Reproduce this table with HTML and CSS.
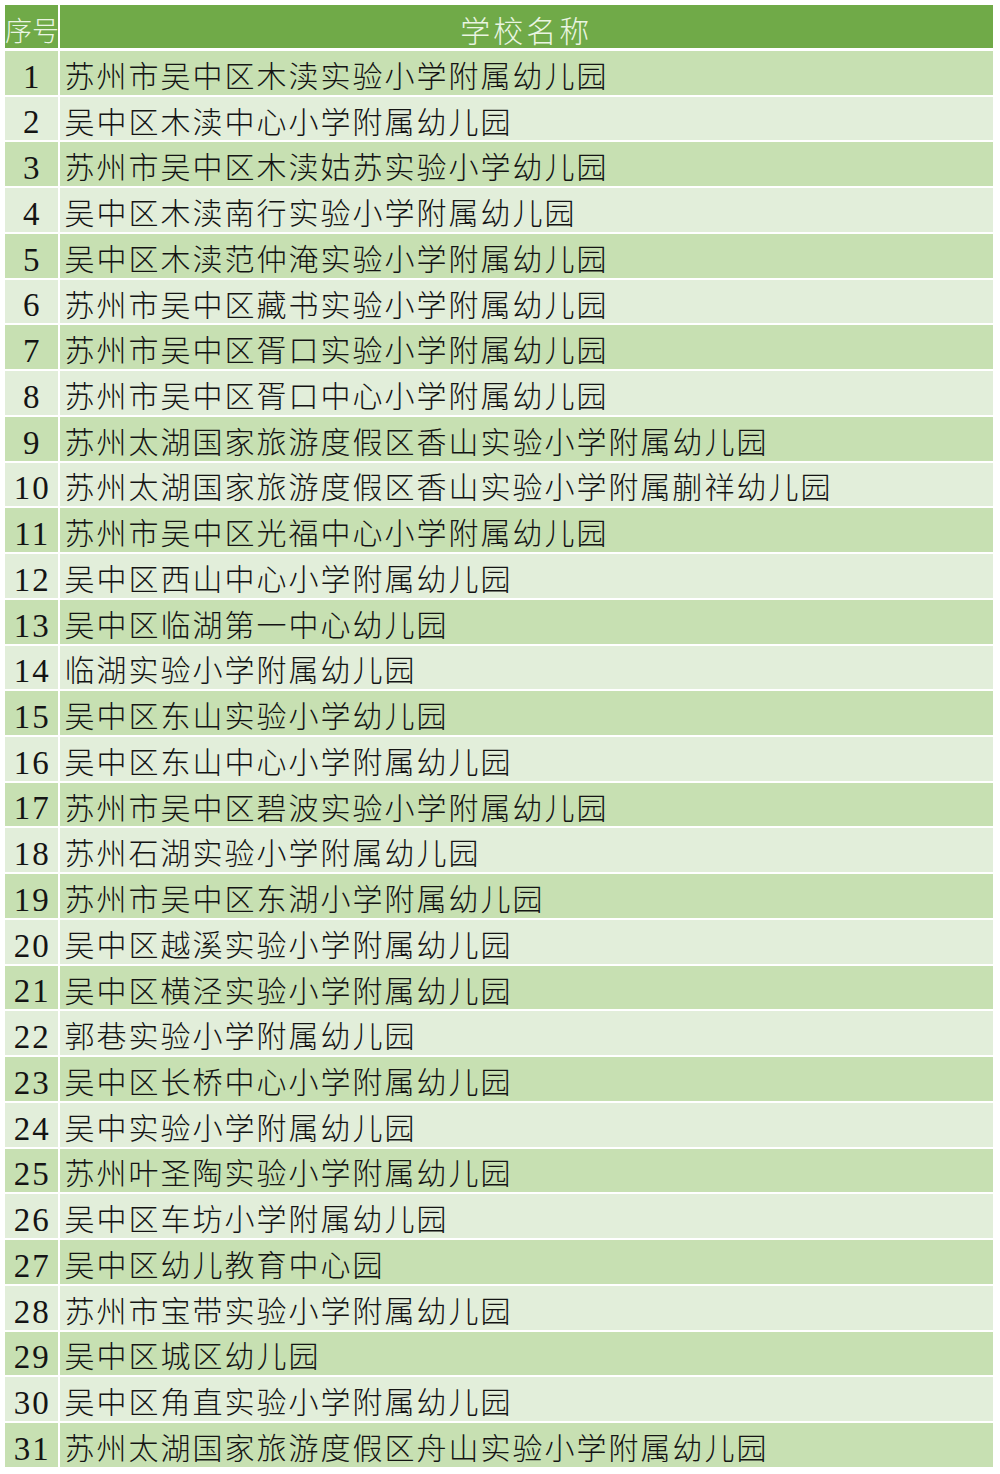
FILE: index.html
```html
<!DOCTYPE html>
<html lang="zh-CN">
<head>
<meta charset="utf-8">
<title>学校名称</title>
<link rel="stylesheet" href="styles.css">
</head>
<body>
<div class="table">
  <div class="row head"><div class="cell num">序号</div><div class="cell name">学校名称</div></div>
  <div class="row odd"><div class="cell num">1</div><div class="cell name">苏州市吴中区木渎实验小学附属幼儿园</div></div>
  <div class="row even"><div class="cell num">2</div><div class="cell name">吴中区木渎中心小学附属幼儿园</div></div>
  <div class="row odd"><div class="cell num">3</div><div class="cell name">苏州市吴中区木渎姑苏实验小学幼儿园</div></div>
  <div class="row even"><div class="cell num">4</div><div class="cell name">吴中区木渎南行实验小学附属幼儿园</div></div>
  <div class="row odd"><div class="cell num">5</div><div class="cell name">吴中区木渎范仲淹实验小学附属幼儿园</div></div>
  <div class="row even"><div class="cell num">6</div><div class="cell name">苏州市吴中区藏书实验小学附属幼儿园</div></div>
  <div class="row odd"><div class="cell num">7</div><div class="cell name">苏州市吴中区胥口实验小学附属幼儿园</div></div>
  <div class="row even"><div class="cell num">8</div><div class="cell name">苏州市吴中区胥口中心小学附属幼儿园</div></div>
  <div class="row odd"><div class="cell num">9</div><div class="cell name">苏州太湖国家旅游度假区香山实验小学附属幼儿园</div></div>
  <div class="row even"><div class="cell num">10</div><div class="cell name">苏州太湖国家旅游度假区香山实验小学附属蒯祥幼儿园</div></div>
  <div class="row odd"><div class="cell num">11</div><div class="cell name">苏州市吴中区光福中心小学附属幼儿园</div></div>
  <div class="row even"><div class="cell num">12</div><div class="cell name">吴中区西山中心小学附属幼儿园</div></div>
  <div class="row odd"><div class="cell num">13</div><div class="cell name">吴中区临湖第一中心幼儿园</div></div>
  <div class="row even"><div class="cell num">14</div><div class="cell name">临湖实验小学附属幼儿园</div></div>
  <div class="row odd"><div class="cell num">15</div><div class="cell name">吴中区东山实验小学幼儿园</div></div>
  <div class="row even"><div class="cell num">16</div><div class="cell name">吴中区东山中心小学附属幼儿园</div></div>
  <div class="row odd"><div class="cell num">17</div><div class="cell name">苏州市吴中区碧波实验小学附属幼儿园</div></div>
  <div class="row even"><div class="cell num">18</div><div class="cell name">苏州石湖实验小学附属幼儿园</div></div>
  <div class="row odd"><div class="cell num">19</div><div class="cell name">苏州市吴中区东湖小学附属幼儿园</div></div>
  <div class="row even"><div class="cell num">20</div><div class="cell name">吴中区越溪实验小学附属幼儿园</div></div>
  <div class="row odd"><div class="cell num">21</div><div class="cell name">吴中区横泾实验小学附属幼儿园</div></div>
  <div class="row even"><div class="cell num">22</div><div class="cell name">郭巷实验小学附属幼儿园</div></div>
  <div class="row odd"><div class="cell num">23</div><div class="cell name">吴中区长桥中心小学附属幼儿园</div></div>
  <div class="row even"><div class="cell num">24</div><div class="cell name">吴中实验小学附属幼儿园</div></div>
  <div class="row odd"><div class="cell num">25</div><div class="cell name">苏州叶圣陶实验小学附属幼儿园</div></div>
  <div class="row even"><div class="cell num">26</div><div class="cell name">吴中区车坊小学附属幼儿园</div></div>
  <div class="row odd"><div class="cell num">27</div><div class="cell name">吴中区幼儿教育中心园</div></div>
  <div class="row even"><div class="cell num">28</div><div class="cell name">苏州市宝带实验小学附属幼儿园</div></div>
  <div class="row odd"><div class="cell num">29</div><div class="cell name">吴中区城区幼儿园</div></div>
  <div class="row even"><div class="cell num">30</div><div class="cell name">吴中区角直实验小学附属幼儿园</div></div>
  <div class="row odd"><div class="cell num">31</div><div class="cell name">苏州太湖国家旅游度假区舟山实验小学附属幼儿园</div></div>
</div>
</body>
</html>
```
FILE: styles.css
```css
html, body {
  margin: 0;
  padding: 0;
  background: #ffffff;
}
body {
  font-family: "Noto Sans CJK SC", "Liberation Serif", sans-serif;
  color: #141414;
}
.table {
  width: 988px;
  padding: 5px 0 0 5px;
  display: flex;
  flex-direction: column;
}
.row {
  display: flex;
  gap: 2px;
  height: 43.74px;
  margin-top: 2px;
}
.row.head {
  height: 43px;
  margin-top: 0;
  margin-bottom: 1px;
}
.cell {
  display: flex;
  align-items: center;
  white-space: nowrap;
  box-sizing: border-box;
  line-height: 1.1;
  padding-top: 3px;
}
.cell.num {
  width: 52.5px;
  flex: none;
  justify-content: center;
  font-family: "Liberation Serif", serif;
  font-size: 33px;
  letter-spacing: 2px;
  text-indent: 2px;
  padding-top: 8px;
}
.cell.name {
  flex: 1;
  padding-left: 5px;
  font-family: "Noto Sans CJK SC", sans-serif;
  font-weight: 300;
  font-size: 30px;
  letter-spacing: 2px;
}
.head .cell {
  background: #70aa48;
  color: #eaf5e2;
  padding-top: 6px;
}
.head .cell.num {
  font-family: "Noto Sans CJK SC", sans-serif;
  font-weight: 300;
  font-size: 27px;
  letter-spacing: 0;
  text-indent: 0;
  justify-content: flex-start;
}
.head .cell.name {
  justify-content: center;
  padding-left: 0;
  font-size: 30px;
  letter-spacing: 3px;
}
.odd .cell {
  background: #c7e0b2;
}
.even .cell {
  background: #e2eeda;
}
```
